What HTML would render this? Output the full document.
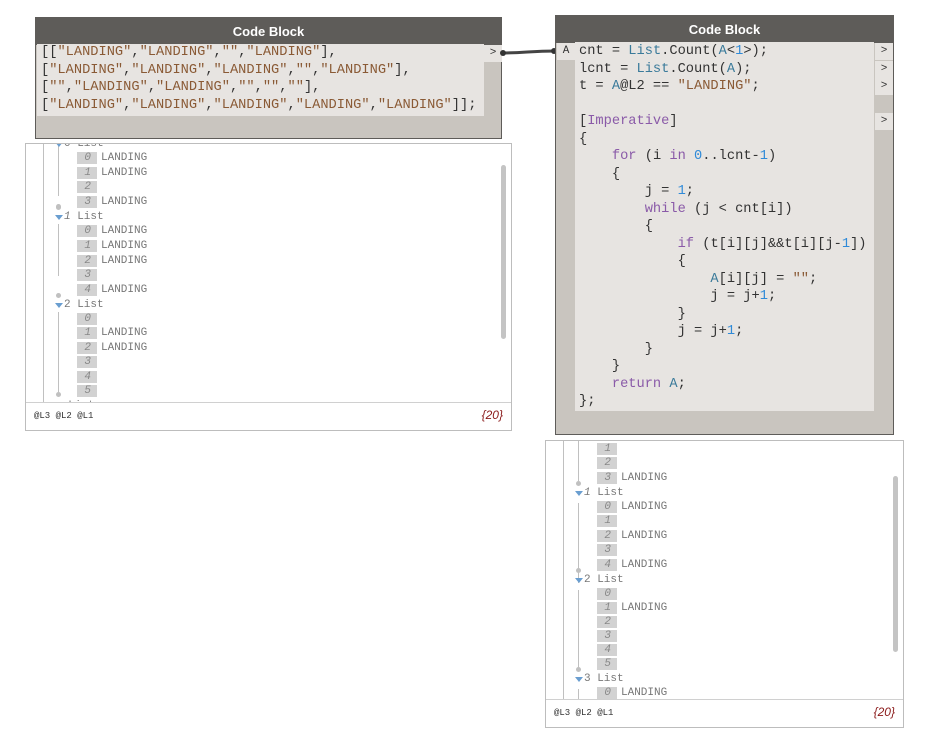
<!DOCTYPE html>
<html><head><meta charset="utf-8"><style>
body{margin:0;width:930px;height:738px;background:#fff;position:relative;overflow:hidden;font-family:"Liberation Sans",sans-serif}
.node{position:absolute;background:#c9c5bf;border:1px solid #5e5c59;box-sizing:border-box}
.hdr{position:absolute;left:0;right:0;top:0;height:27px;background:#5e5c59;color:#fff;font-weight:bold;font-size:13px;text-align:center;line-height:27px}
.code{position:absolute;background:#e7e4e1;font-family:"Liberation Mono",monospace;font-size:13.7px;line-height:17.5px;color:#333;white-space:pre}
.s{color:#8a5a35}.k{color:#8a5aa8}.n{color:#2f8ad8}.v{color:#3a7a9a}
.port{position:absolute;background:#e7e4e1;font-size:11px;color:#333;text-align:center;font-family:"Liberation Mono",monospace;line-height:17px;width:18px;height:17px}
.w{position:absolute;border:1px solid #bdbdbd;background:#fff;box-sizing:border-box}
.wc{position:absolute;left:0;right:0;top:0;overflow:hidden;font-family:"Liberation Mono",monospace;font-size:11px;color:#777}
.r{position:absolute;left:0;height:14px;line-height:14px;white-space:pre}
.ib{position:absolute;left:51px;top:1px;width:20px;height:12px;background:#d2d2d2;color:#888;font-style:italic;text-align:right;box-sizing:border-box;padding-right:6px;line-height:12px}
.t{position:absolute;left:75px}
.lh{position:absolute;left:29px;white-space:pre}
.lh b{display:inline-block;width:0;height:0;border-left:4px solid transparent;border-right:4px solid transparent;border-top:5px solid #6a9ed0;margin-right:1px;vertical-align:-1px}
.vl{position:absolute;width:1px;background:#c0c0c0}
.dot{position:absolute;width:5px;height:5px;border-radius:50%;background:#c0c0c0}
.ft{position:absolute;left:0;right:0;bottom:0;height:27px;border-top:1px solid #d0d0d0;font-size:9px;color:#333;font-family:"Liberation Mono",monospace}
.sb{position:absolute;width:5px;border-radius:3px;background:#c4c4c4}
</style></head><body>

<div class="node" style="left:35px;top:17px;width:467px;height:122px">
<div class="hdr">Code Block</div>
<div class="code" style="left:1px;top:26px;width:447px;height:72px;padding-left:4px;box-sizing:border-box">[[<span class="s">"LANDING"</span>,<span class="s">"LANDING"</span>,<span class="s">""</span>,<span class="s">"LANDING"</span>],
[<span class="s">"LANDING"</span>,<span class="s">"LANDING"</span>,<span class="s">"LANDING"</span>,<span class="s">""</span>,<span class="s">"LANDING"</span>],
[<span class="s">""</span>,<span class="s">"LANDING"</span>,<span class="s">"LANDING"</span>,<span class="s">""</span>,<span class="s">""</span>,<span class="s">""</span>],
[<span class="s">"LANDING"</span>,<span class="s">"LANDING"</span>,<span class="s">"LANDING"</span>,<span class="s">"LANDING"</span>,<span class="s">"LANDING"</span>]];</div>
<div class="port" style="left:448px;top:27px">&gt;</div>
</div>

<svg style="position:absolute;left:0;top:0" width="930" height="738"><path d="M501 53 C525 53,530 51,556 51" stroke="#444" stroke-width="3" fill="none"/><circle cx="503" cy="53" r="3" fill="#333"/><circle cx="554" cy="51" r="3" fill="#333"/></svg>

<div class="node" style="left:555px;top:15px;width:339px;height:420px">
<div class="hdr">Code Block</div>
<div class="port" style="left:1px;top:27px;width:18px">A</div>
<div class="code" style="left:19px;top:26px;width:299px;height:369px;padding:1px 0 0 4px;box-sizing:border-box">cnt = <span class="v">List</span>.Count(<span class="v">A</span>&lt;<span class="n">1</span>&gt;);
lcnt = <span class="v">List</span>.Count(<span class="v">A</span>);
t = <span class="v">A</span>@L2 == <span class="s">"LANDING"</span>;

[<span class="k">Imperative</span>]
{
    <span class="k">for</span> (i <span class="k">in</span> <span class="n">0</span>..lcnt-<span class="n">1</span>)
    {
        j = <span class="n">1</span>;
        <span class="k">while</span> (j &lt; cnt[i])
        {
            <span class="k">if</span> (t[i][j]&amp;&amp;t[i][j-<span class="n">1</span>])
            {
                <span class="v">A</span>[i][j] = <span class="s">""</span>;
                j = j+<span class="n">1</span>;
            }
            j = j+<span class="n">1</span>;
        }
    }
    <span class="k">return</span> <span class="v">A</span>;
};</div>
<div class="port" style="left:319px;top:27px">&gt;</div>
<div class="port" style="left:319px;top:45px">&gt;</div>
<div class="port" style="left:319px;top:62px">&gt;</div>
<div class="port" style="left:319px;top:97px">&gt;</div>
</div>

<!-- left watch -->
<div class="w" style="left:25px;top:143px;width:487px;height:288px">
<div class="wc" style="height:259px">
<div class="vl" style="left:17px;top:0;height:259px"></div>
<div class="vl" style="left:32px;top:0;height:52px"></div><div class="dot" style="left:30px;top:60px"></div>
<div class="vl" style="left:32px;top:80px;height:52px"></div><div class="dot" style="left:30px;top:248px"></div>
<div class="vl" style="left:32px;top:168px;height:80px"></div>
<div class="r" style="top:-7px"><span class="lh"><b></b>0 List</span></div>
<div class="r" style="top:7px"><span class="ib">0</span><span class="t">LANDING</span></div>
<div class="r" style="top:22px"><span class="ib">1</span><span class="t">LANDING</span></div>
<div class="r" style="top:36px"><span class="ib">2</span></div>
<div class="r" style="top:51px"><span class="ib">3</span><span class="t">LANDING</span></div>
<div class="dot" style="left:30px;top:61px"></div>
<div class="r" style="top:66px"><span class="lh"><b></b><i>1</i> List</span></div>
<div class="r" style="top:80px"><span class="ib">0</span><span class="t">LANDING</span></div>
<div class="r" style="top:95px"><span class="ib">1</span><span class="t">LANDING</span></div>
<div class="r" style="top:110px"><span class="ib">2</span><span class="t">LANDING</span></div>
<div class="r" style="top:124px"><span class="ib">3</span></div>
<div class="r" style="top:139px"><span class="ib">4</span><span class="t">LANDING</span></div>
<div class="dot" style="left:30px;top:149px"></div>
<div class="r" style="top:154px"><span class="lh"><b></b>2 List</span></div>
<div class="r" style="top:168px"><span class="ib">0</span></div>
<div class="r" style="top:182px"><span class="ib">1</span><span class="t">LANDING</span></div>
<div class="r" style="top:197px"><span class="ib">2</span><span class="t">LANDING</span></div>
<div class="r" style="top:211px"><span class="ib">3</span></div>
<div class="r" style="top:226px"><span class="ib">4</span></div>
<div class="r" style="top:240px"><span class="ib">5</span></div>
<div class="r" style="top:255px"><span class="lh">  List</span></div>
</div>
<div class="sb" style="left:475px;top:21px;height:174px"></div>
<div class="ft"><span style="position:absolute;left:8px;top:8px">@L3 @L2 @L1</span><span style="position:absolute;right:8px;top:5px;font-size:12px;color:#8b1a1a;font-style:italic;font-family:'Liberation Sans',sans-serif">{20}</span></div>
</div>

<!-- right watch -->
<div class="w" style="left:545px;top:440px;width:359px;height:288px">
<div class="wc" style="height:259px">
<div class="vl" style="left:17px;top:0;height:259px"></div>
<div class="vl" style="left:32px;top:0;height:40px"></div><div class="dot" style="left:30px;top:40px"></div>
<div class="vl" style="left:32px;top:62px;height:80px"></div><div class="dot" style="left:30px;top:127px"></div>
<div class="vl" style="left:32px;top:149px;height:80px"></div><div class="dot" style="left:30px;top:226px"></div>
<div class="vl" style="left:32px;top:248px;height:20px"></div>
<div class="r" style="top:1px"><span class="ib">1</span></div>
<div class="r" style="top:15px"><span class="ib">2</span></div>
<div class="r" style="top:30px"><span class="ib">3</span><span class="t">LANDING</span></div>
<div class="r" style="top:45px"><span class="lh"><b></b><i>1</i> List</span></div>
<div class="r" style="top:59px"><span class="ib">0</span><span class="t">LANDING</span></div>
<div class="r" style="top:73px"><span class="ib">1</span></div>
<div class="r" style="top:88px"><span class="ib">2</span><span class="t">LANDING</span></div>
<div class="r" style="top:102px"><span class="ib">3</span></div>
<div class="r" style="top:117px"><span class="ib">4</span><span class="t">LANDING</span></div>
<div class="r" style="top:132px"><span class="lh"><b></b>2 List</span></div>
<div class="r" style="top:146px"><span class="ib">0</span></div>
<div class="r" style="top:160px"><span class="ib">1</span><span class="t">LANDING</span></div>
<div class="r" style="top:174px"><span class="ib">2</span></div>
<div class="r" style="top:188px"><span class="ib">3</span></div>
<div class="r" style="top:202px"><span class="ib">4</span></div>
<div class="r" style="top:216px"><span class="ib">5</span></div>
<div class="r" style="top:231px"><span class="lh"><b></b>3 List</span></div>
<div class="r" style="top:245px"><span class="ib">0</span><span class="t">LANDING</span></div>
</div>
<div class="sb" style="left:347px;top:35px;height:176px"></div>
<div class="ft"><span style="position:absolute;left:8px;top:8px">@L3 @L2 @L1</span><span style="position:absolute;right:8px;top:5px;font-size:12px;color:#8b1a1a;font-style:italic;font-family:'Liberation Sans',sans-serif">{20}</span></div>
</div>
</body></html>
